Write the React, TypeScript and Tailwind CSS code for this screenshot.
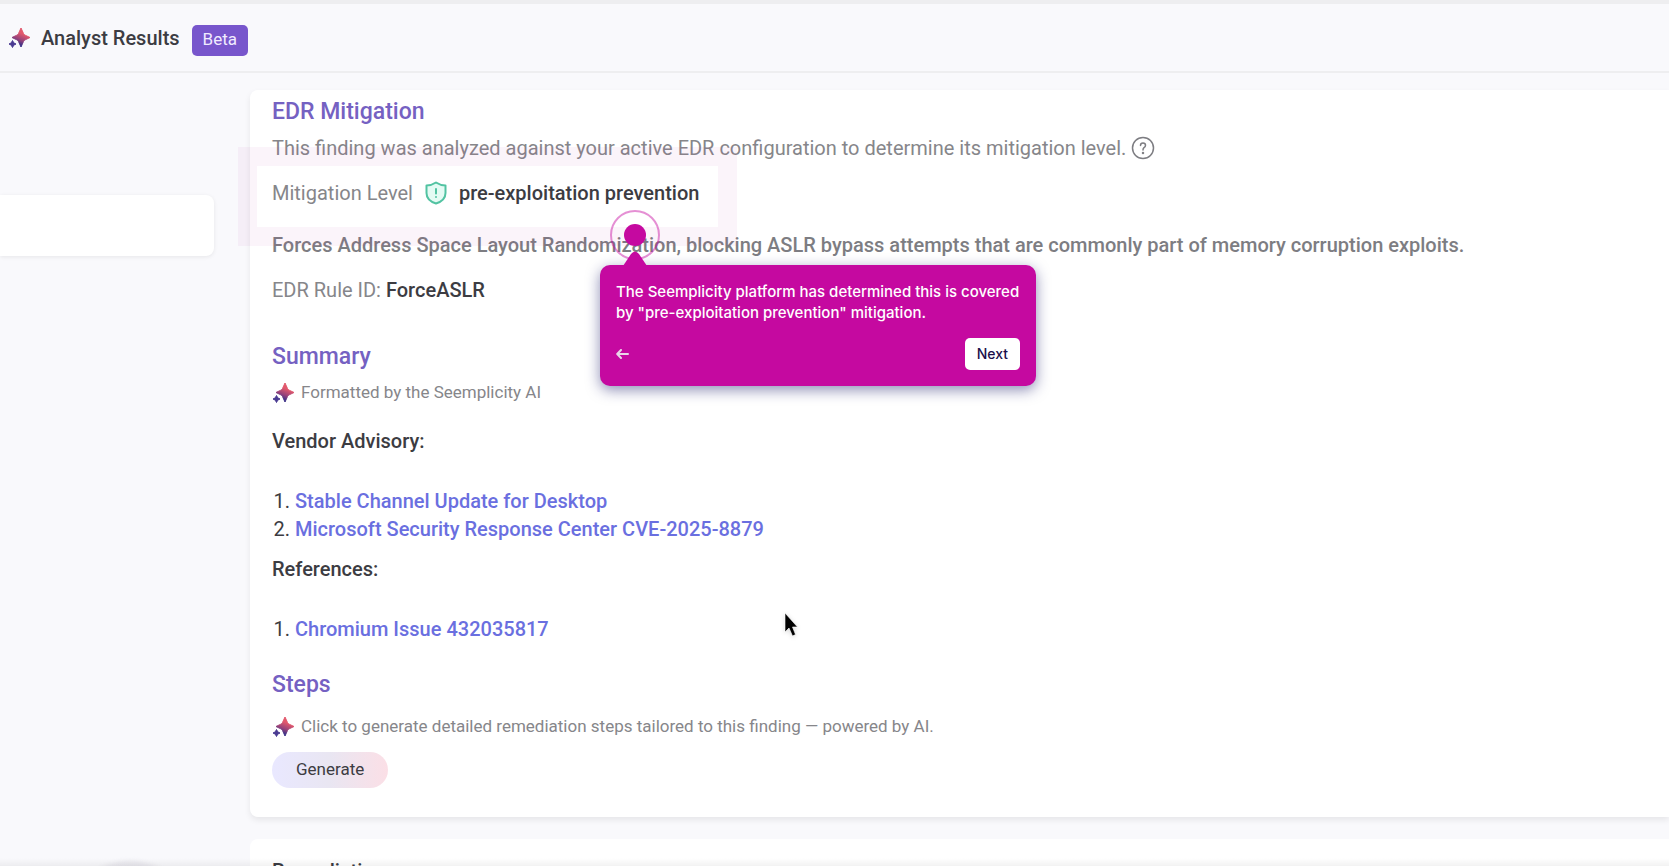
import { ReactNode } from "react"

export default function App() {
    return <div className="relative h-screen overflow-hidden flex flex-col bg-[#f9f9fc] font-['Roboto',sans-serif] text-xl text-[#3c3c42]">
        <Header />
        <div className="grow min-h-0 flex">
            <aside className="w-[250px] shrink-0 pr-9 relative">
                <div className="mt-[122px] h-[61px] bg-white rounded-r-lg shadow-[0_1px_4px_rgba(0,0,0,0.08)]" />
                <div className="absolute top-[788px] left-[66px] size-32 rounded-full bg-[#e9e8ee] blur-[2px]" />
            </aside>
            <main className="grow min-w-0 pt-[17px]">
                <ResultsCard />
                <section className="mt-[22px] h-40 bg-white rounded-tl-lg px-[22px] pt-5">
                    <h2 className="leading-6 font-medium">Remediation</h2>
                </section>
            </main>
        </div>
        <div className="absolute inset-x-0 bottom-0 h-2 bg-linear-to-b from-transparent to-black/5 pointer-events-none" />
    </div>
}

function Header() {
    return <header className="h-[73px] shrink-0 border-t-4 border-b-2 border-[#eeeef0] flex items-center px-2">
        <Sparkle className="size-6" />
        <h1 className="ml-[9px] font-medium leading-6">Analyst Results</h1>
        <span className="ml-3 mt-[5px] h-[31px] px-[11px] rounded-[5px] bg-[#7856cc] text-[17px] text-[#f1ebff] flex items-center">Beta</span>
    </header>
}

function ResultsCard() {
    return <section className="bg-white rounded-lg rounded-r-none px-[22px] pt-[6px] pb-[29px] shadow-[0_3px_6px_rgba(0,0,0,0.08)]">
        <Title>EDR Mitigation</Title>
        <p className="mt-[6px] h-7 flex items-center gap-[5px] text-[#86868a]">
            This finding was analyzed against your active EDR configuration to determine its mitigation level.
            <HelpIcon />
        </p>
        <div className="relative mt-[17px] h-7 flex items-center">
            <span className="text-[#86868a]">Mitigation Level</span>
            <ShieldIcon />
            <span className="font-medium">pre-exploitation prevention</span>
            <Guide />
        </div>
        <p className="mt-6 leading-7 font-medium text-[#7d7d82]">
            Forces Address Space Layout Randomization, blocking ASLR bypass attempts that are commonly part of memory corruption exploits.
        </p>
        <p className="mt-[17px] mb-[37px] leading-7 text-[#86868a]">EDR Rule ID: <span className="font-medium text-[#3c3c42]">ForceASLR</span></p>

        <Title>Summary</Title>
        <Note className="mt-[6px]">Formatted by the Seemplicity AI</Note>
        <h3 className="mt-5 leading-7 font-medium">Vendor Advisory:</h3>
        <ol className="mt-8 leading-7 list-decimal pl-[23px]">
            <li><Anchor>Stable Channel Update for Desktop</Anchor></li>
            <li><Anchor>Microsoft Security Response Center CVE-2025-8879</Anchor></li>
        </ol>
        <h3 className="mt-3 leading-7 font-medium">References:</h3>
        <ol className="mt-8 mb-[26px] leading-7 list-decimal pl-[23px]">
            <li><Anchor>Chromium Issue 432035817</Anchor></li>
        </ol>

        <Title>Steps</Title>
        <Note className="mt-3">Click to generate detailed remediation steps tailored to this finding — powered by AI.</Note>
        <button className="mt-[11px] h-9 px-6 rounded-full bg-linear-to-r from-[#e9e8ff] via-[#e9e6f2] to-[#fbdfe6] text-[17px] cursor-pointer">Generate</button>
    </section>
}

function Title(props: { children: ReactNode }) {
    return <h2 className="text-[23px] leading-8 font-medium text-[#7561c2]">{props.children}</h2>
}

function Note(props: { children: ReactNode, className: string }) {
    return <p className={props.className + " h-7 flex items-center gap-[5px] text-[17px] text-[#86868a]"}>
        <Sparkle className="size-6" />
        {props.children}
    </p>
}

function Anchor(props: { children: ReactNode }) {
    return <a href="#" className="font-medium text-[#6a6fe0]">{props.children}</a>
}

// highlighted area, beacon and popover of the guided tour
function Guide() {
    return <>
        <div className="absolute -left-[34px] -top-[32px] w-[499px] h-[99px] border-[19px] border-[#b0209f]/5 pointer-events-none" />
        <div className="absolute left-[338px] top-[31px] size-[50px] rounded-full border-2 border-[#c509a0]/45 flex items-center justify-center z-10">
            <div className="size-[22px] rounded-full bg-[#c509a0]" />
        </div>
        <div className="absolute left-[328px] top-[86px] w-[436px] h-[121px] z-20 rounded-[10px] bg-[#c509a0] p-4 shadow-[0_4px_14px_rgba(30,30,110,0.5)] flex flex-col font-['Inter',sans-serif] text-[15px] leading-[21px] font-medium text-white">
            <svg viewBox="0 0 24 15" className="absolute left-[23px] -top-[14px] w-6 h-[15px]">
                <path d="M0 15 L8 3 Q12 -2 16 3 L24 15Z" fill="#c509a0" />
            </svg>
            <p>The Seemplicity platform has determined this is covered by "pre-exploitation prevention" mitigation.</p>
            <div className="mt-auto flex items-center justify-between">
                <button aria-label="Back" className="cursor-pointer">
                    <svg viewBox="0 0 13 10" className="w-[13px] h-[10px]" fill="none" stroke="#e9d5e8" strokeWidth="2" strokeLinecap="round" strokeLinejoin="round">
                        <path d="M12 5H1.500M5 1L1.200 5L5 9" />
                    </svg>
                </button>
                <button className="h-8 px-3 rounded-[5px] bg-white text-sm text-[#1b0f4b] cursor-pointer">Next</button>
            </div>
        </div>
        <svg viewBox="0 0 14 26" className="absolute left-[512px] top-[433px] w-[14px] h-[26px] z-20 drop-shadow-sm">
            <path d="M1 1 V20 L5 16 L8.500 24 L11.500 22.500 L8.500 15 H13.500Z" fill="#000" stroke="#fff" strokeWidth="0.600" />
        </svg>
    </>
}

function Sparkle(props: { className: string }) {
    return <svg viewBox="0 0 24 24" className={props.className + " shrink-0"}>
        <defs>
            <linearGradient id="sparkle" x1="0.700" y1="0" x2="0.300" y2="1">
                <stop offset="0.300" stopColor="#e2586c" />
                <stop offset="0.620" stopColor="#96427a" />
                <stop offset="0.850" stopColor="#3d3187" />
            </linearGradient>
        </defs>
        <path d="M13 2 L15.500 7.500 Q16 8.700 17.200 9.200 L22 11.500 L17.200 13.800 Q16 14.300 15.500 15.500 L13 21 L10.500 15.500 Q10 14.300 8.800 13.800 L4 11.500 L8.800 9.200 Q10 8.700 10.500 7.500Z" fill="url(#sparkle)" stroke="url(#sparkle)" strokeLinejoin="round" />
        <path d="M4.500 14.500 L5.700 16.800 L8 18 L5.700 19.200 L4.500 21.500 L3.300 19.200 L1 18 L3.300 16.800Z" fill="#4a3b92" stroke="#4a3b92" strokeLinejoin="round" />
    </svg>
}

function HelpIcon() {
    return <svg viewBox="0 0 24 24" className="size-6 shrink-0" fill="none" stroke="#7d7d82" strokeWidth="1.500" strokeLinecap="round">
        <circle cx="12" cy="12" r="10.500" />
        <path d="M9.500 9.500 Q9.500 7 12 7 Q14.500 7 14.500 9.300 Q14.500 10.700 13 11.700 Q12 12.400 12 14" />
        <circle cx="12" cy="17" r="0.500" fill="#7d7d82" />
    </svg>
}

function ShieldIcon() {
    return <svg viewBox="0 0 22 24" className="mx-3 w-[22px] h-6 shrink-0" fill="#e4fbf4" stroke="#52c3a2" strokeWidth="2" strokeLinecap="round" strokeLinejoin="round">
        <path d="M11 1.500 Q15.500 4.500 20.500 4.500 V12 Q20.500 19.500 11 22.500 Q1.500 19.500 1.500 12 V4.500 Q6.500 4.500 11 1.500Z" />
        <path d="M11 8V12.500M11 16V16.100" />
    </svg>
}
